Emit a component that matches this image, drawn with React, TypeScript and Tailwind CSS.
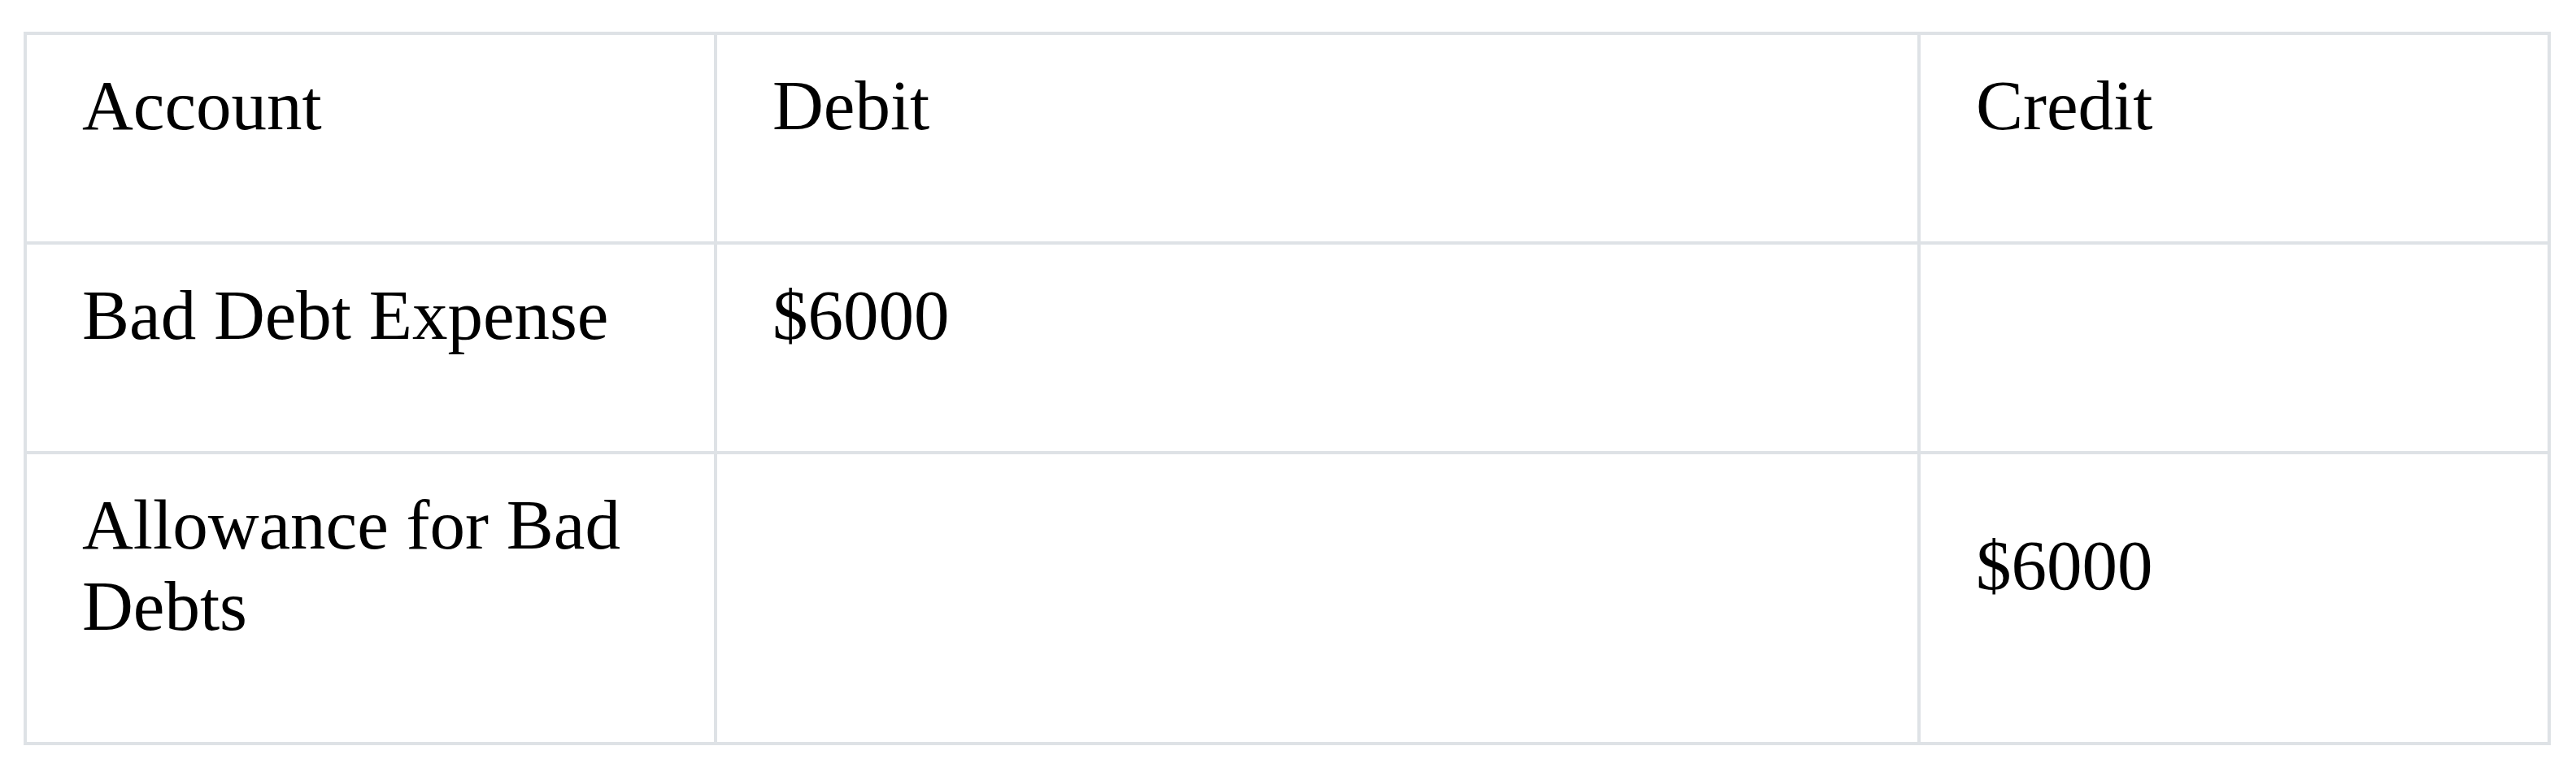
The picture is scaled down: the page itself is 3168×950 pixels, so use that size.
import React from "react";

const rows: [string, string, string][] = [
  ["Account", "Debit", "Credit"],
  ["Bad Debt Expense", "$6000", ""],
  ["Allowance for Bad Debts", "", "$6000"],
];

export default function App() {
  return (
    <div className="min-h-screen bg-white pl-[29px] pt-[39px]" style={{ fontFamily: '"Liberation Serif", "Times New Roman", serif' }}>
      <table className="w-[3108px] table-fixed border-collapse text-[87px] leading-[100px] text-black">
        <colgroup>
          <col className="w-[849px]" />
          <col className="w-[1480px]" />
          <col className="w-[775px]" />
        </colgroup>
        <tbody>
          {rows.map((r, i) => (
            <tr key={i}>
              {r.map((c, j) => (
                <td key={j} className="border-[4px] border-[#dee2e6] px-[68px] py-[37px] align-middle">
                  <p className="mb-[80px] min-h-[100px]">{c}</p>
                </td>
              ))}
            </tr>
          ))}
        </tbody>
      </table>
    </div>
  );
}
